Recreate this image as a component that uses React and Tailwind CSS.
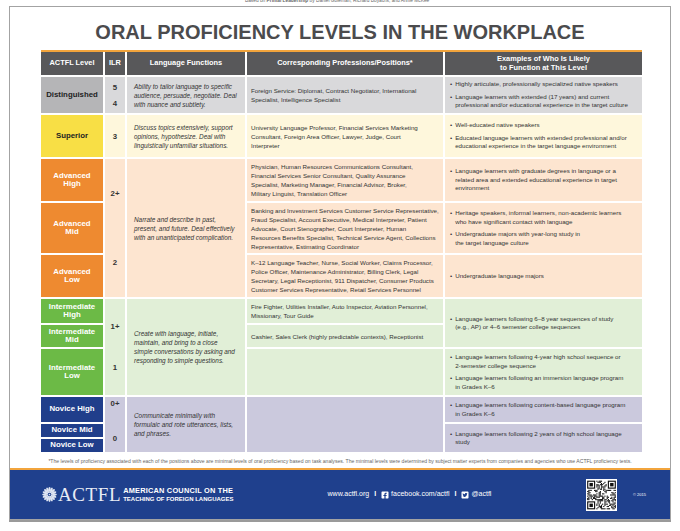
import React from "react";
import { FaFacebookSquare, FaTwitterSquare } from "react-icons/fa";

const LEVELS = {
  dist: { label: "bg-[#b5b5b7] text-[#222]", cell: "bg-[#d9d9db]" },
  sup: { label: "bg-[#f8df45] text-[#222]", cell: "bg-[#fef7dc]" },
  adv: { label: "bg-[#ee8a30] text-white", cell: "bg-[#fde5d0]" },
  int: { label: "bg-[#6cba46] text-white", cell: "bg-[#e1efd7]" },
  nov: { label: "bg-[#203e8b] text-white", cell: "bg-[#cbc9dd]" },
};

const Lines = ({ lines }) =>
  lines.map((l, i) => (
    <div key={i} className="whitespace-nowrap">
      {l}
    </div>
  ));

const Bullets = ({ items }) => (
  <div className="flex flex-col gap-[4px]">
    {items.map((lines, i) => (
      <div key={i} className="flex gap-[3px]">
        <span>•</span>
        <div>
          <Lines lines={lines} />
        </div>
      </div>
    ))}
  </div>
);

// pseudo random QR modules
const qrCells = [];
let seed = 7;
for (let y = 0; y < 25; y++) {
  for (let x = 0; x < 25; x++) {
    seed = (seed * 1103515245 + 12345) % 2147483648;
    const inFinder = (x < 8 && y < 8) || (x > 16 && y < 8) || (x < 8 && y > 16);
    if (!inFinder && seed % 100 < 48) qrCells.push([x, y]);
  }
}

const Finder = ({ x, y }) => (
  <g>
    <rect x={x} y={y} width="7" height="7" fill="#111" />
    <rect x={x + 1} y={y + 1} width="5" height="5" fill="#fff" />
    <rect x={x + 2} y={y + 2} width="3" height="3" fill="#111" />
  </g>
);

const QrCode = () => (
  <svg width="31" height="32" viewBox="-1 -1 27 27" className="bg-white">
    <rect x="-1" y="-1" width="27" height="27" fill="#fff" />
    {qrCells.map(([x, y], i) => (
      <rect key={i} x={x} y={y} width="1" height="1" fill="#111" />
    ))}
    <Finder x={0} y={0} />
    <Finder x={18} y={0} />
    <Finder x={0} y={18} />
  </svg>
);

const Rosette = () => (
  <svg width="15" height="15" viewBox="0 0 14 14">
    {Array.from({ length: 16 }).map((_, i) => (
      <ellipse
        key={i}
        cx="7"
        cy="2.4"
        rx="1.05"
        ry="2.3"
        fill="#dfe5f2"
        transform={`rotate(${i * 22.5} 7 7)`}
      />
    ))}
    <circle cx="7" cy="7" r="2.6" fill="#dfe5f2" />
    <circle cx="7" cy="7" r="1.7" fill="#1f408d" />
    <circle cx="7" cy="7" r="0.8" fill="#dfe5f2" />
  </svg>
);

const Label = ({ lvl, row, children }) => (
  <div
    className={`${LEVELS[lvl].label} ${row} col-start-1 flex items-center justify-center text-center text-[7.8px] leading-[8.5px] font-bold`}
  >
    <div>{children}</div>
  </div>
);

const Cell = ({ lvl, col, row, className = "", children }) => (
  <div className={`${LEVELS[lvl].cell} ${col} ${row} flex flex-col ${className}`}>{children}</div>
);

const HeadCell = ({ children, className = "" }) => (
  <div
    className={`bg-[#58585a] text-white font-bold text-[7.4px] leading-[8.5px] flex items-center justify-center text-center ${className}`}
  >
    {children}
  </div>
);

export default function App() {
  return (
    <div className="w-[680px] h-[531px] bg-white font-['Liberation_Sans',Arial,sans-serif] text-[#333]">
      <div className="h-[6px] overflow-hidden pl-[245px] text-[4.8px] leading-[5px] text-[#666]">
        <div className="-mt-[2px] whitespace-nowrap">
          Based on <b>Primal Leadership</b> by Daniel Goleman, Richard Boyatzis, and Annie McKee
        </div>
      </div>

      <div className="ml-[9px] w-[662px] border border-[#a3a3a3] bg-white">
        <h1 className="pt-[13px] h-[37px] text-center text-[20px] leading-[24px] font-bold text-[#4b4b4d] whitespace-nowrap">
          ORAL PROFICIENCY LEVELS IN THE WORKPLACE
        </h1>

        <div className="mt-[6px] ml-[31px] w-[601px]">
          <div className="h-[2px] bg-[#f2a43c]" />
          <div className="grid grid-cols-[62px_20px_118px_196px_197px] grid-rows-[23px_36px_42px_42px_50px_42px_24px_22px_46px_25px_13px_13px] gap-[2px] text-[6.2px] leading-[9px]">
            {/* header */}
            <HeadCell>ACTFL Level</HeadCell>
            <HeadCell>ILR</HeadCell>
            <HeadCell>Language Functions</HeadCell>
            <HeadCell>Corresponding Professions/Positions*</HeadCell>
            <HeadCell>
              Examples of Who Is Likely
              <br />
              to Function at This Level
            </HeadCell>

            {/* ACTFL levels */}
            <Label lvl="dist" row="row-start-2">Distinguished</Label>
            <Label lvl="sup" row="row-start-3">Superior</Label>
            <Label lvl="adv" row="row-start-4">Advanced<br />High</Label>
            <Label lvl="adv" row="row-start-5">Advanced<br />Mid</Label>
            <Label lvl="adv" row="row-start-6">Advanced<br />Low</Label>
            <Label lvl="int" row="row-start-7">Intermediate<br />High</Label>
            <Label lvl="int" row="row-start-8">Intermediate<br />Mid</Label>
            <Label lvl="int" row="row-start-9">Intermediate<br />Low</Label>
            <Label lvl="nov" row="row-start-10">Novice High</Label>
            <Label lvl="nov" row="row-start-11">Novice Mid</Label>
            <Label lvl="nov" row="row-start-12">Novice Low</Label>

            {/* ILR */}
            <Cell lvl="dist" col="col-start-2" row="row-start-2" className="items-center justify-center gap-[7px] font-bold text-[7.8px]">
              <div>5</div>
              <div>4</div>
            </Cell>
            <Cell lvl="sup" col="col-start-2" row="row-start-3" className="items-center justify-center font-bold text-[7.8px]">
              <div>3</div>
            </Cell>
            <Cell lvl="adv" col="col-start-2" row="row-start-4 row-span-3" className="items-center pt-[30px] gap-[60px] font-bold text-[7.8px]">
              <div>2+</div>
              <div>2</div>
            </Cell>
            <Cell lvl="int" col="col-start-2" row="row-start-7 row-span-3" className="items-center pt-[23px] gap-[32px] font-bold text-[7.8px]">
              <div>1+</div>
              <div>1</div>
            </Cell>
            <Cell lvl="nov" col="col-start-2" row="row-start-10 row-span-3" className="items-center pt-[2px] gap-[26px] font-bold text-[7.8px]">
              <div>0+</div>
              <div>0</div>
            </Cell>

            {/* language functions */}
            <Cell lvl="dist" col="col-start-3" row="row-start-2" className="justify-center pl-[7px] italic text-[6.4px]">
              <Lines lines={["Ability to tailor language to specific", "audience, persuade, negotiate. Deal", "with nuance and subtlety."]} />
            </Cell>
            <Cell lvl="sup" col="col-start-3" row="row-start-3" className="justify-center pl-[7px] italic text-[6.4px]">
              <Lines lines={["Discuss topics extensively, support", "opinions, hypothesize. Deal with", "linguistically unfamiliar situations."]} />
            </Cell>
            <Cell lvl="adv" col="col-start-3" row="row-start-4 row-span-3" className="justify-center pl-[7px] italic text-[6.4px]">
              <Lines lines={["Narrate and describe in past,", "present, and future. Deal effectively", "with an unanticipated complication."]} />
            </Cell>
            <Cell lvl="int" col="col-start-3" row="row-start-7 row-span-3" className="justify-center pl-[7px] italic text-[6.4px]">
              <Lines lines={["Create with language, initiate,", "maintain, and bring to a close", "simple conversations by asking and", "responding to simple questions."]} />
            </Cell>
            <Cell lvl="nov" col="col-start-3" row="row-start-10 row-span-3" className="justify-center pl-[7px] italic text-[6.4px]">
              <Lines lines={["Communicate minimally with", "formulaic and rote utterances, lists,", "and phrases."]} />
            </Cell>

            {/* professions */}
            <Cell lvl="dist" col="col-start-4" row="row-start-2" className="justify-center pl-[4px]">
              <Lines lines={["Foreign Service: Diplomat, Contract Negotiator, International", "Specialist, Intelligence Specialist"]} />
            </Cell>
            <Cell lvl="sup" col="col-start-4" row="row-start-3" className="justify-center pl-[4px]">
              <Lines lines={["University Language Professor, Financial Services Marketing", "Consultant, Foreign Area Officer, Lawyer, Judge, Court", "Interpreter"]} />
            </Cell>
            <Cell lvl="adv" col="col-start-4" row="row-start-4" className="justify-center pl-[4px]">
              <Lines lines={["Physician, Human Resources Communications Consultant,", "Financial Services Senior Consultant, Quality Assurance", "Specialist, Marketing Manager, Financial Advisor, Broker,", "Military Linguist, Translation Officer"]} />
            </Cell>
            <Cell lvl="adv" col="col-start-4" row="row-start-5" className="justify-center pl-[4px]">
              <Lines lines={["Banking and Investment Services Customer Service Representative,", "Fraud Specialist, Account Executive, Medical Interpreter, Patient", "Advocate, Court Stenographer, Court Interpreter, Human", "Resources Benefits Specialist, Technical Service Agent, Collections", "Representative, Estimating Coordinator"]} />
            </Cell>
            <Cell lvl="adv" col="col-start-4" row="row-start-6" className="justify-center pl-[4px]">
              <Lines lines={["K–12 Language Teacher, Nurse, Social Worker, Claims Processor,", "Police Officer, Maintenance Administrator, Billing Clerk, Legal", "Secretary, Legal Receptionist, 911 Dispatcher, Consumer Products", "Customer Services Representative, Retail Services Personnel"]} />
            </Cell>
            <Cell lvl="int" col="col-start-4" row="row-start-7" className="justify-center pl-[4px]">
              <Lines lines={["Fire Fighter, Utilities Installer, Auto Inspector, Aviation Personnel,", "Missionary, Tour Guide"]} />
            </Cell>
            <Cell lvl="int" col="col-start-4" row="row-start-8" className="justify-center pl-[4px]">
              <Lines lines={["Cashier, Sales Clerk (highly predictable contexts), Receptionist"]} />
            </Cell>
            <Cell lvl="int" col="col-start-4" row="row-start-9" />
            <Cell lvl="nov" col="col-start-4" row="row-start-10 row-span-3" />

            {/* examples */}
            <Cell lvl="dist" col="col-start-5" row="row-start-2" className="justify-center pl-[5px] leading-[8.5px]">
              <Bullets items={[["Highly articulate, professionally specialized native speakers"], ["Language learners with extended (17 years) and current", "professional and/or educational experience in the target culture"]]} />
            </Cell>
            <Cell lvl="sup" col="col-start-5" row="row-start-3" className="justify-center pl-[5px] leading-[8.5px]">
              <Bullets items={[["Well-educated native speakers"], ["Educated language learners with extended professional and/or", "educational experience in the target language environment"]]} />
            </Cell>
            <Cell lvl="adv" col="col-start-5" row="row-start-4" className="justify-center pl-[5px] leading-[8.5px]">
              <Bullets items={[["Language learners with graduate degrees in language or a", "related area and extended educational experience in target", "environment"]]} />
            </Cell>
            <Cell lvl="adv" col="col-start-5" row="row-start-5" className="justify-center pl-[5px] leading-[8.5px]">
              <Bullets items={[["Heritage speakers, informal learners, non-academic learners", "who have significant contact with language"], ["Undergraduate majors with year-long study in", "the target language culture"]]} />
            </Cell>
            <Cell lvl="adv" col="col-start-5" row="row-start-6" className="justify-center pl-[5px] leading-[8.5px]">
              <Bullets items={[["Undergraduate language majors"]]} />
            </Cell>
            <Cell lvl="int" col="col-start-5" row="row-start-7 row-span-2" className="justify-center pl-[5px] leading-[8.5px]">
              <Bullets items={[["Language learners following 6–8 year sequences of study", "(e.g., AP) or 4–6 semester college sequences"]]} />
            </Cell>
            <Cell lvl="int" col="col-start-5" row="row-start-9" className="justify-center pl-[5px] leading-[8.5px]">
              <Bullets items={[["Language learners following 4-year high school sequence or", "2-semester college sequence"], ["Language learners following an immersion language program", "in Grades K–6"]]} />
            </Cell>
            <Cell lvl="nov" col="col-start-5" row="row-start-10" className="justify-center pl-[5px] leading-[8.5px]">
              <Bullets items={[["Language learners following content-based language program", "in Grades K–6"]]} />
            </Cell>
            <Cell lvl="nov" col="col-start-5" row="row-start-11 row-span-2" className="justify-center pl-[5px] leading-[8.5px]">
              <Bullets items={[["Language learners following 2 years of high school language", "study"]]} />
            </Cell>
          </div>
        </div>

        <p className="mt-[6px] h-[6px] text-center text-[5.1px] leading-[6px] text-[#666] whitespace-nowrap">
          *The levels of proficiency associated with each of the positions above are minimal levels of oral proficiency based on task analyses. The minimal levels were determined by subject matter experts from companies and agencies who use ACTFL proficiency tests.
        </p>

        <footer className="mt-[4px] border-t-2 border-[#f2a43c] bg-[#1f408d] h-[51px] flex items-center pl-[32px] text-white">
          <Rosette />
          <span className="ml-[1px] font-['Liberation_Serif',serif] text-[19px] leading-[20px] tracking-[0.6px] text-[#e8ecf5]">
            ACTFL
          </span>
          <div className="ml-[2px] flex flex-col font-semibold leading-[8px]">
            <span className="text-[7.4px] tracking-[0.2px] whitespace-nowrap">AMERICAN COUNCIL ON THE</span>
            <span className="text-[6px] whitespace-nowrap">TEACHING OF FOREIGN LANGUAGES</span>
          </div>
          <div className="ml-[94px] flex items-center gap-[5px] text-[7px] whitespace-nowrap">
            <span>www.actfl.org</span>
            <span className="font-bold">I</span>
            <span className="flex items-center gap-[2px]">
              <FaFacebookSquare className="w-[8px] h-[8px]" />
              facebook.com/actfl
            </span>
            <span className="font-bold">I</span>
            <span className="flex items-center gap-[2px]">
              <FaTwitterSquare className="w-[8px] h-[8px]" />
              @actfl
            </span>
          </div>
          <div className="ml-auto">
            <QrCode />
          </div>
          <span className="ml-[16px] mr-[24px] text-[4px]">© 2015</span>
        </footer>
      </div>
      <div className="ml-[9px] w-[662px] h-[2px] bg-[#9a9a9a]" />
    </div>
  );
}
